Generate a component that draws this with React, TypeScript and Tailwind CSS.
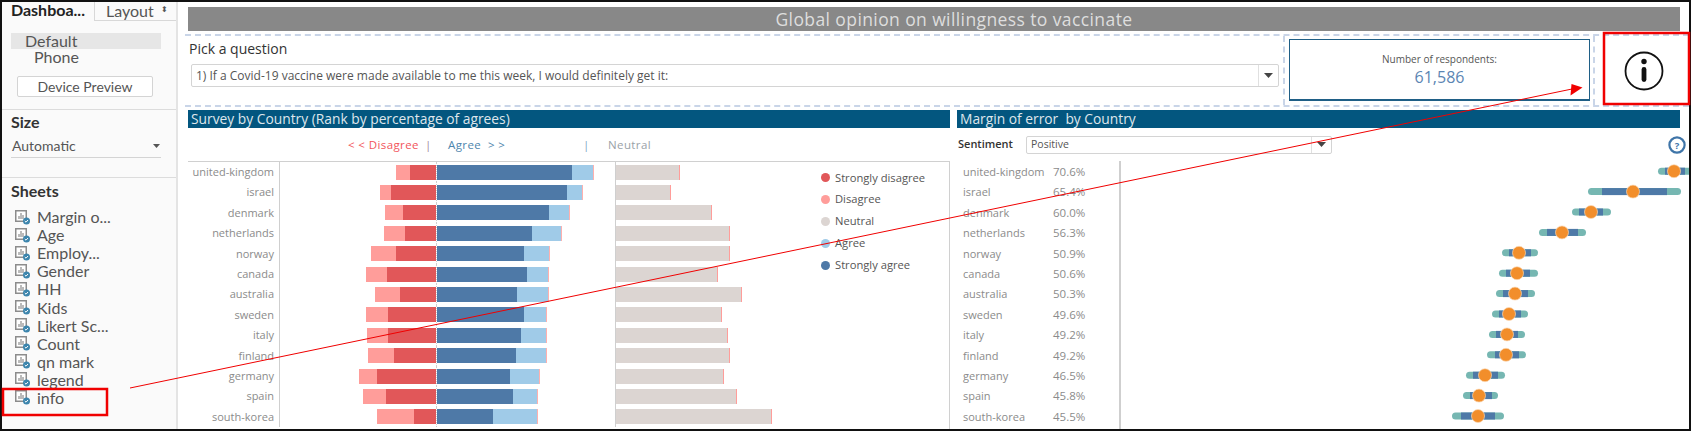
const sheets = ['Margin o...', 'Age', 'Employ...', 'Gender', 'HH', 'Kids', 'Likert Sc...', 'Count', 'qn mark', 'legend', 'info'];

// x positions in page pixels: light red start, dark red start, dark blue end, light blue end, neutral end
const survey = [
  { name: 'united-kingdom', a: 396, b: 410, c: 572, d: 594, n: 680, pct: '70.6%' },
  { name: 'israel', a: 380, b: 391, c: 567, d: 583, n: 671, pct: '65.4%' },
  { name: 'denmark', a: 385, b: 403, c: 549, d: 570, n: 712, pct: '60.0%' },
  { name: 'netherlands', a: 384, b: 405, c: 532, d: 562, n: 730, pct: '56.3%' },
  { name: 'norway', a: 371, b: 396, c: 524, d: 550, n: 730, pct: '50.9%' },
  { name: 'canada', a: 366, b: 387, c: 527, d: 549, n: 718, pct: '50.6%' },
  { name: 'australia', a: 375, b: 400, c: 517, d: 549, n: 742, pct: '50.3%' },
  { name: 'sweden', a: 366, b: 388, c: 524, d: 547, n: 722, pct: '49.6%' },
  { name: 'italy', a: 367, b: 388, c: 521, d: 547, n: 728, pct: '49.2%' },
  { name: 'finland', a: 368, b: 394, c: 516, d: 547, n: 730, pct: '49.2%' },
  { name: 'germany', a: 359, b: 377, c: 510, d: 540, n: 724, pct: '46.5%' },
  { name: 'spain', a: 363, b: 386, c: 513, d: 538, n: 737, pct: '45.8%' },
  { name: 'south-korea', a: 377, b: 414, c: 493, d: 538, n: 772, pct: '45.5%' },
];

// margin of error ranges: outer start, inner start, dot, inner end, outer end
const margins = [
  [1658, 1665, 1674, 1685, 1692],
  [1588, 1602, 1633, 1667, 1681],
  [1572, 1579, 1591, 1603, 1611],
  [1539, 1547, 1562, 1578, 1586],
  [1502, 1509, 1519, 1531, 1538],
  [1499, 1506, 1517, 1530, 1538],
  [1496, 1503, 1515, 1528, 1535],
  [1492, 1499, 1509, 1521, 1528],
  [1489, 1496, 1507, 1518, 1525],
  [1487, 1495, 1506, 1519, 1526],
  [1466, 1473, 1485, 1498, 1505],
  [1463, 1470, 1479, 1492, 1498],
  [1452, 1461, 1478, 1495, 1504],
];

const legend = [
  { label: 'Strongly disagree', color: 'bg-[#e15759]' },
  { label: 'Disagree', color: 'bg-[#ff9d9a]' },
  { label: 'Neutral', color: 'bg-[#dcd5d2]' },
  { label: 'Agree', color: 'bg-[#a0cbe8]' },
  { label: 'Strongly agree', color: 'bg-[#4e79a7]' },
];

function Caret() {
  return (
    <svg width="9" height="5" viewBox="0 0 9 5">
      <path d="M0 0h9L4.5 5z" fill="#444" />
    </svg>
  );
}

function SheetIcon() {
  return (
    <svg width="16" height="17" viewBox="0 0 16 17" className="shrink-0">
      <rect x="0.75" y="1.75" width="10.5" height="10.5" fill="#fff" stroke="#8c8c8c" strokeWidth="1.5" />
      <path d="M4 10V7M6 10V4M8 10V6" stroke="#777" strokeWidth="1" />
      <circle cx="11.5" cy="12" r="3.5" fill="#3c85ad" />
      <path d="M9.8 12l1.2 1.2 2-2.2" stroke="#fff" strokeWidth="1" fill="none" />
    </svg>
  );
}

function Select({ text, className, textClass }: { text: string; className: string; textClass: string }) {
  return (
    <div className={`flex items-center border border-[#d4d4d4] rounded-[2px] bg-white ${className}`}>
      <span className={`flex-1 pl-1 text-[#555] ${textClass}`}>{text}</span>
      <div className="w-[20px] h-full flex items-center justify-center border-l border-[#e0e0e0]">
        <Caret />
      </div>
    </div>
  );
}

function Sidebar() {
  return (
    <aside className="w-[176px] shrink-0 h-full bg-[#fafafa] border-r-2 border-[#e4e4e4] text-[#555] font-['Lato',sans-serif]">
      <div className="flex h-[19px]">
        <div className="w-[92px] pl-[9px] text-[16px] leading-[16px] font-bold text-[#222] whitespace-nowrap">Dashboa...</div>
        <div className="flex-1 flex justify-between pl-[11px] pr-[8px] border-l border-b border-[#d8d8d8] text-[16px] leading-[18px]">
          <span>Layout</span>
          <span className="text-[8px] leading-[14px]">⬍</span>
        </div>
      </div>
      <div className="pt-[12px] pb-[12px] border-b border-[#dcdcdc]">
        <div className="ml-[9px] w-[150px] h-[16px] pl-[14px] bg-[#e6e6e6] text-[16px] leading-[16px]">Default</div>
        <div className="h-[16px] pl-[32px] text-[16px] leading-[16px]">Phone</div>
        <div className="ml-[15px] mt-[11px] w-[136px] h-[21px] flex items-center justify-center bg-white border border-[#d4d4d4] rounded-[2px] text-[14px]">
          Device Preview
        </div>
      </div>
      <div className="pb-[19px] border-b border-[#dcdcdc]">
        <div className="h-[24px] pl-[9px] text-[16px] leading-[24px] font-bold text-[#333]">Size</div>
        <div className="ml-[9px] w-[150px] h-[24px] flex items-center justify-between pl-[1px] pr-[1px] border-b border-[#d4d4d4] text-[14px]">
          <span>Automatic</span>
          <svg width="7" height="4" viewBox="0 0 7 4"><path d="M0 0h7L3.5 4z" fill="#555" /></svg>
        </div>
      </div>
      <div className="h-[30px] pl-[9px] text-[16px] leading-[26px] font-bold text-[#333]">Sheets</div>
      <div className="pl-[13px]">
        {sheets.map((s) => (
          <div key={s} className="h-[18.1px] flex items-center gap-[6px] text-[16px] leading-[18px] whitespace-nowrap">
            <SheetIcon />
            <span>{s}</span>
          </div>
        ))}
      </div>
    </aside>
  );
}

function TopBand() {
  return (
    <div className="ml-[7px] mt-[3px] h-[73px] flex border-y-2 border-dashed border-[#c9d5e8]">
      <div className="w-[1100px] pl-[4px] border-r-2 border-dashed border-[#c9d5e8]">
        <div className="h-[28px] text-[14px] leading-[25px] text-[#333]">Pick a question</div>
        <Select
          text="1) If a Covid-19 vaccine were made available to me this week, I would definitely get it:"
          className="ml-[2px] w-[1088px] h-[23px]"
          textClass="text-[12px]"
        />
      </div>
      <div className="w-[310px] pl-[4px] pt-[3px] border-r-2 border-dashed border-[#c9d5e8]">
        <div className="w-[301px] h-[62px] flex flex-col items-center justify-center border border-b-2 border-[#1f5f86]">
          <span className="text-[10px] leading-[15px] text-[#555]">Number of respondents:</span>
          <span className="text-[16px] leading-[21px] text-[#5b85b3]">61,586</span>
        </div>
      </div>
      <div className="flex-1 flex items-center justify-center pl-[4px]">
        <svg width="42" height="42" viewBox="0 0 42 42">
          <circle cx="21" cy="21" r="18.5" fill="none" stroke="#111" strokeWidth="1.8" />
          <circle cx="21" cy="11.5" r="2.7" fill="#111" />
          <rect x="18.6" y="17" width="4.8" height="15" rx="2.4" fill="#111" />
        </svg>
      </div>
    </div>
  );
}

function SurveyChart() {
  return (
    <div className="w-[762px] shrink-0 flex flex-col">
      <div className="h-[18px] bg-[#03567f] pl-[3px] text-[13.8px] leading-[17px] text-[#dfe6ec] whitespace-nowrap">
        Survey by Country (Rank by percentage of agrees)
      </div>
      <div className="h-[33px] flex items-center pl-[160px] text-[11.5px] tracking-[0.4px] whitespace-nowrap">
        <span className="w-[77px] text-[#f2545b]">{'< < Disagree'}</span>
        <span className="w-[23px] text-[#a08a9c]">|</span>
        <span className="w-[135px] text-[#4e86ad] whitespace-pre">{'Agree  > >'}</span>
        <span className="w-[25px] text-[#7fa6c4]">|</span>
        <span className="text-[#9aa2a8]">Neutral</span>
      </div>
      <div className="flex-1 flex border-t border-r border-[#d0d0d0]">
        <div className="w-[628px]">
          {survey.map((r) => (
            <div key={r.name} className="h-[20.4px] flex">
              <div className="w-[92px] shrink-0 pr-[5px] text-right text-[11px] leading-[20px] text-[#8b8b8b] border-r border-[#cfcfcf]">
                {r.name}
              </div>
              <div className="w-[156px] shrink-0 flex justify-end items-center">
                <div className="h-[15px] bg-[#ff9d9a]" style={{ width: r.b - r.a }} />
                <div className="h-[15px] bg-[#e15759]" style={{ width: 436 - r.b }} />
              </div>
              <div className="w-[179px] shrink-0 flex items-center border-l border-dotted border-[#cfcfcf]">
                <div className="h-[15px] bg-[#4e79a7]" style={{ width: r.c - 437 }} />
                <div className="h-[15px] bg-[#a0cbe8] border-r border-[#ffb0ae]" style={{ width: r.d - r.c }} />
              </div>
              <div className="flex-1 flex items-center border-l border-[#cfcfcf]">
                <div className="h-[15px] bg-[#dcd5d2] border-r border-[#ff9d9a]" style={{ width: r.n - 616 }} />
              </div>
            </div>
          ))}
        </div>
        <div className="flex-1 pt-[5px] pl-[5px]">
          {legend.map((l) => (
            <div key={l.label} className="h-[21.8px] flex items-center gap-[5px] text-[11.2px] text-[#555] whitespace-nowrap">
              <span className={`w-[9px] h-[9px] rounded-full ${l.color}`} />
              <span>{l.label}</span>
            </div>
          ))}
        </div>
      </div>
    </div>
  );
}

function MarginChart() {
  const x0 = 1121;
  return (
    <div className="flex-1 flex flex-col">
      <div className="h-[18px] mr-[9px] bg-[#03567f] pl-[3px] text-[13.8px] leading-[17px] text-[#dfe6ec] whitespace-pre">
        Margin of error  by Country
      </div>
      <div className="h-[33px] flex items-center pl-[1px] pr-[3px]">
        <span className="w-[68px] text-[11px] font-semibold text-[#333]">Sentiment</span>
        <Select text="Positive" className="w-[306px] h-[18px]" textClass="text-[10.5px]" />
        <svg width="18" height="18" viewBox="0 0 18 18" className="ml-auto">
          <circle cx="9" cy="9" r="7.6" fill="#fff" stroke="#3f75a8" strokeWidth="2.2" />
          <text x="9" y="12.5" textAnchor="middle" fontSize="9.5" fontWeight="700" fill="#3f75a8" fontFamily="Open Sans, sans-serif">?</text>
        </svg>
      </div>
      <div className="flex-1 flex">
        <div className="w-[164px] shrink-0 border-r-2 border-[#cfcfcf] text-[#8b8b8b]">
          {survey.map((r) => (
            <div key={r.name} className="h-[20.4px] flex pl-[6px] leading-[21px]">
              <span className="w-[90px] text-[11px]">{r.name}</span>
              <span className="text-[11.5px]">{r.pct}</span>
            </div>
          ))}
        </div>
        <svg width="568" height="266" viewBox="0 0 568 266" className="shrink-0">
          {margins.map(([o0, i0, dot, i1, o1], i) => {
            const y = 10.2 + i * 20.4;
            return (
              <g key={i}>
                <line x1={o0 - x0 + 3.5} x2={o1 - x0 - 3.5} y1={y} y2={y} stroke="#76b7b2" strokeWidth="7" strokeLinecap="round" />
                <rect x={i0 - x0} y={y - 3.5} width={i1 - i0} height="7" fill="#4e79a7" />
                <circle cx={dot - x0} cy={y} r="6.5" fill="#f28e2b" stroke="#fbd9b5" strokeWidth="0.7" />
              </g>
            );
          })}
        </svg>
      </div>
    </div>
  );
}

export default function App() {
  return (
    <div className="relative w-[1691px] h-[431px] overflow-hidden bg-white font-['Open_Sans',sans-serif]">
      <div className="w-full h-full flex border-2 border-[#111]">
        <Sidebar />
        <main className="flex-1 min-w-0 flex flex-col pt-[5px]">
          <div className="ml-[10px] mr-[9px] h-[24px] pl-[40px] bg-[#888888] text-center text-[17.5px] leading-[25px] tracking-[0.4px] text-[#dedede]">
            Global opinion on willingness to vaccinate
          </div>
          <TopBand />
          <div className="flex-1 min-h-0 flex gap-[7px] ml-[10px] mt-[3px]">
            <SurveyChart />
            <MarginChart />
          </div>
        </main>
      </div>

      {/* red annotation drawn over the dashboard */}
      <svg width="1691" height="431" viewBox="0 0 1691 431" className="absolute top-0 left-0 pointer-events-none">
        <rect x="3" y="389" width="104" height="26" fill="none" stroke="#f00000" strokeWidth="2.5" />
        <rect x="1604" y="33" width="85" height="71" fill="none" stroke="#f00000" strokeWidth="2.5" />
        <line x1="130" y1="388" x2="1572" y2="89" stroke="#f00000" strokeWidth="1" />
        <path d="M1571.5 84L1582.5 87.5L1570.5 95.5z" fill="#f00000" />
      </svg>
    </div>
  );
}
